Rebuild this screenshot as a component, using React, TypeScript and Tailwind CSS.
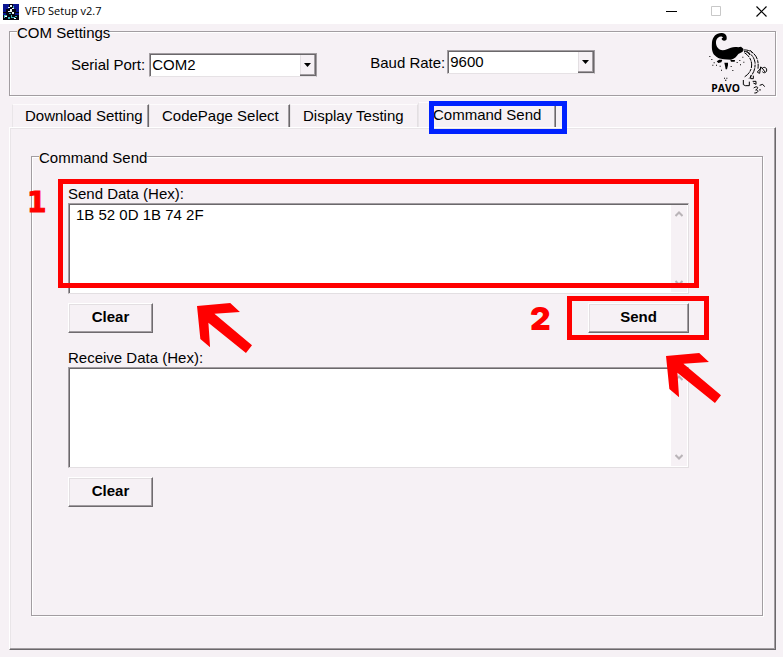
import type { ReactNode } from "react";
import clsx from "clsx";

const tabs = ["Download Setting", "CodePage Select", "Display Testing", "Command Send"];
const tabWidths = ["w-[137px]", "w-[141px]", "w-[128px]", "w-[138px]"];

function AppIcon() {
    return (
        <svg viewBox="0 0 16 16" className="w-4 h-4" shapeRendering="crispEdges">
            <rect width="16" height="16" fill="#050510" />
            <path d="M0 0h6v5H3v3H0zM10 0h6v8h-3V5h-3zM0 9h3v2H0zM12 9h4v2h-4z" fill="#0a1590" />
            <path d="M7 1h2v2H7zM5 3h2v1H5zM9 4h2v1H9zM7 5h2v3H7zM5 7h2v1H5zM9 8h2v2H9z" fill="#e8f4f8" />
            <path d="M1 11h3v1H2v2H1zM5 13h2v2H5zM8 11h1v2h3v1H8zM12 12h2v1h-2zM10 2h1v2h-1zM6 9h2v1H6z" fill="#3fb5bd" />
            <path d="M2 12h2v1H2zM11 14h2v1h-2z" fill="#ffffff" />
        </svg>
    );
}

function PavoLogo() {
    return (
        <svg viewBox="78 96 192 192" className="w-16 h-16" role="img" aria-label="PAVO">
            <path
                d="M140 117c2-10-4-17-14-18-17-1-28 11-30 27-1 17-1 31 8 40 8 8 16 11 27 12l22 1c11-2 17-10 22-17l13-7 2-9-7-6-8 2c-14-3-24 1-34 6-13 5-23 3-29-6-6-11-5-24 2-29 6-5 13-4 15 0-4 0-5 3-3 6 4 5 13 4 14-2z"
                fill="#000"
            />
            <path d="M110 184l8-5h9l-3 8-9 2zM133 188h11v8l-3 12h-4l-2-11zM151 180h14l-1 5h-11z" fill="#000" />
            <path
                d="M190 150c19-2 36 10 42 28 3 10 3 18 2 28M192 154c18 2 30 15 33 33 2 18-4 34-18 49M193 158c14 8 22 22 22 37 0 14-7 27-22 36M210 151l8 7M200 153l10 12"
                fill="none"
                stroke="#000"
                strokeWidth="3"
                strokeDasharray="20 3 9 2"
            />
            <path
                d="M232 216l13-14 10 14M242 200l-3 20-7-3M246 206c5-7 14-4 14 4 0 8-8 11-13 5M190 240v14l6 3h12v-12M212 226v10h8v-9M218 244h10v9l-8-4M221 264c10-8 18-1 6 6 11-1 8 10-4 9M239 256l9-3 6 7M240 267v5"
                fill="none"
                stroke="#000"
                strokeWidth="3"
            />
            <path
                d="M88 168h3v3h-3zM94 177h3v3h-3zM101 187h3v3h-3zM97 194h3v3h-3zM108 194h3v3h-3zM119 197h3v3h-3zM123 209h3v3h-3zM152 198h3v3h-3zM157 210h3v3h-3zM170 186h3v3h-3zM178 180h3v3h-3zM180 193h3v3h-3zM187 170h3v3h-3zM190 185h3v3h-3zM132 233h3v3h-3zM139 233h3v3h-3zM135 239h4v3h-4z"
                fill="#000"
            />
            <text x="94" y="276" fontSize="31" fontWeight="700" fontFamily="'Open Sans', sans-serif">
                PAVO
            </text>
        </svg>
    );
}

function Arrow({ className }: { className: string }) {
    return (
        <svg viewBox="531 399 164 149" className={clsx("absolute z-10 w-[55px] h-[50px] pointer-events-none", className)}>
            <path d="M531 408L630 399L659 426L583 431L695 525L677 548L565 458L570 531L541 506Z" fill="#ff0000" />
        </svg>
    );
}

function GroupBox({ title, className, children }: { title: string; className: string; children: ReactNode }) {
    return (
        <fieldset
            className={clsx(
                "min-w-0 border border-[#a29da1] shadow-[inset_1px_1px_0_#fff,1px_1px_0_#fff]",
                className
            )}
        >
            <legend className="h-[15px] ml-[7px] pt-px leading-[15px] bg-[#f6f1f5]">{title}</legend>
            {children}
        </fieldset>
    );
}

function ComboBox({ id, options, className }: { id: string; options: string[]; className: string }) {
    return (
        <div className={clsx("relative h-6", className)}>
            <select
                id={id}
                className="block w-full h-full pl-[2px] pb-px leading-5 bg-white border border-t-[#a29da1] border-l-[#a29da1] border-b-[#e6e2e5] border-r-[#a29da1] shadow-[inset_1px_1px_0_#6b686b] appearance-none outline-none"
            >
                {options.map((o) => (
                    <option key={o}>{o}</option>
                ))}
            </select>
            <span className="absolute top-[2px] right-px bottom-px flex items-center justify-center w-4 bg-[#f6f1f5] border-r border-b border-[#6b686b] shadow-[inset_-1px_-1px_0_#a29da1,inset_1px_0_0_#e3dfe2] pointer-events-none">
                <svg viewBox="0 0 7 4" className="w-[7px] h-1">
                    <path d="M0 0h7L3.500 4z" fill="#000" />
                </svg>
            </span>
        </div>
    );
}

function HexBox({ id, value, className }: { id: string; value: string; className: string }) {
    return (
        <div
            className={clsx(
                "flex p-px bg-white border border-t-[#a29da1] border-l-[#a29da1] border-b-[#e3dfe2] border-r-[#e3dfe2] shadow-[inset_1px_1px_0_#6b686b]",
                className
            )}
        >
            <textarea id={id} defaultValue={value} className="flex-1 pt-px pl-[6px] leading-[18px] resize-none outline-none" />
            <div className="flex flex-col items-center justify-between w-4 py-[6px] bg-[#f6f1f5]">
                <svg viewBox="0 0 8 6" className="w-2 h-[6px]">
                    <path d="M0.500 5L4 1.500L7.500 5" fill="none" stroke="#b9b4b8" strokeWidth="2" />
                </svg>
                <svg viewBox="0 0 8 6" className="w-2 h-[6px]">
                    <path d="M0.500 1L4 4.500L7.500 1" fill="none" stroke="#b9b4b8" strokeWidth="2" />
                </svg>
            </div>
        </div>
    );
}

function PushButton({ className, children }: { className: string; children: ReactNode }) {
    return (
        <button
            type="button"
            className={clsx(
                "h-[30px] pb-[2px] font-bold bg-[#f6f1f5] border border-t-white border-l-white border-b-[#6f6b6f] border-r-[#6f6b6f] shadow-[inset_-1px_-1px_0_#a29da1,inset_1px_1px_0_#e3dfe2]",
                className
            )}
        >
            {children}
        </button>
    );
}

export default function App() {
    return (
        <div className="flex flex-col min-h-screen bg-[#f6f1f5] text-[15px] text-black font-['Liberation_Sans',Arial,sans-serif]">
            <header className="flex items-center h-6 pl-[3px] overflow-hidden bg-white">
                <AppIcon />
                <h1 className="ml-[6px] mb-[2px] text-[11px] leading-4 font-['Open_Sans','Noto_Sans',sans-serif]">VFD Setup v2.7</h1>
                <div className="flex items-center ml-auto -mr-px mb-[2px]">
                    <button type="button" aria-label="Minimize" className="flex justify-center w-[45px]">
                        <svg viewBox="0 0 11 11" className="w-[11px] h-[11px]">
                            <path d="M0 5h11v1H0z" fill="#000" />
                        </svg>
                    </button>
                    <button type="button" aria-label="Maximize" disabled className="flex justify-center w-[45px]">
                        <svg viewBox="0 0 11 11" className="w-[11px] h-[11px]">
                            <path d="M.5.5h9v9h-9z" fill="none" stroke="#c8c8c8" />
                        </svg>
                    </button>
                    <button type="button" aria-label="Close" className="flex justify-center w-[45px]">
                        <svg viewBox="0 0 11 11" className="w-[11px] h-[11px]">
                            <path d="M.5.5l10 10M10.500.5l-10 10" fill="none" stroke="#000" strokeWidth="1.200" />
                        </svg>
                    </button>
                </div>
            </header>

            <main className="flex flex-col flex-1 pl-[9px] pr-[7px] pb-[7px]">
                <GroupBox title="COM Settings" className="h-[72px]">
                    <div className="flex items-start -mt-[7px] pl-[61px] pr-[5px]">
                        <label htmlFor="port" className="mt-6 leading-[18px]">
                            Serial Port:
                        </label>
                        <div className="mt-[21px] ml-1">
                            <ComboBox id="port" options={["COM2", "COM1", "COM3"]} className="w-[168px]" />
                        </div>
                        <label htmlFor="baud" className="mt-[22px] ml-[53px] leading-[18px]">
                            Baud Rate:
                        </label>
                        <div className="mt-[18px] ml-[2px]">
                            <ComboBox id="baud" options={["9600", "19200", "38400"]} className="w-[148px]" />
                        </div>
                        <div className="ml-auto">
                            <PavoLogo />
                        </div>
                    </div>
                </GroupBox>

                <div role="tablist" className="flex items-end h-[31px] pl-[3px]">
                    {tabs.map((tab, i) => {
                        const active = i === 3;
                        return (
                            <div key={tab} className={clsx("relative", tabWidths[i])}>
                                <button
                                    type="button"
                                    role="tab"
                                    aria-selected={active}
                                    className={clsx(
                                        "block w-full text-left whitespace-nowrap leading-[22px] border-t border-l border-t-[#fdfbfc] border-l-[#e9e5e8]",
                                        active ? "h-[25px] pl-[14px]" : "h-[23px] pl-3",
                                        i === 2
                                            ? "border-r border-r-[#e3dfe2]"
                                            : "border-r border-r-[#6b686b] shadow-[inset_-1px_0_0_#a29da1]"
                                    )}
                                >
                                    {tab}
                                </button>
                                {active && (
                                    <span className="absolute -top-px left-[11px] w-[138px] h-[33px] border-[5px] border-[#0022ff] pointer-events-none" />
                                )}
                            </div>
                        );
                    })}
                </div>

                <section
                    role="tabpanel"
                    className="flex flex-col flex-1 pt-[21px] pr-3 pb-[33px] pl-[21px] border border-t-white border-l-white border-r-[#6b686b] border-b-[#6b686b] shadow-[inset_-1px_-1px_0_#a29da1,inset_1px_1px_0_#e9e5e8]"
                >
                    <GroupBox title="Command Send" className="flex-1">
                        <div className="relative pt-[21px] pb-8 pl-9 pr-[73px]">
                            <label htmlFor="send" className="block leading-[18px]">
                                Send Data (Hex):
                            </label>
                            <HexBox id="send" value="1B 52 0D 1B 74 2F" className="h-[91px]" />
                            <div className="flex justify-between mt-[9px]">
                                <PushButton className="w-[85px]">Clear</PushButton>
                                <div className="relative">
                                    <PushButton className="w-[101px]">Send</PushButton>
                                    <span className="absolute -top-[7px] -left-[21px] w-[142px] h-[44px] border-[5px] border-[#ff0000] pointer-events-none" />
                                    <span className="absolute top-px -left-[58px] text-[32px] leading-[30px] font-black text-[#ff0000] font-['Inter',sans-serif]">
                                        2
                                    </span>
                                    <Arrow className="top-[50px] left-[78px]" />
                                </div>
                            </div>
                            <label htmlFor="receive" className="block mt-4 leading-[18px]">
                                Receive Data (Hex):
                            </label>
                            <HexBox id="receive" value="" className="h-[101px]" />
                            <PushButton className="w-[85px] mt-[9px]">Clear</PushButton>

                            <span className="absolute top-[15px] left-[26px] right-[63px] h-[109px] border-[5px] border-[#ff0000] pointer-events-none" />
                            <span className="absolute top-6 -left-[5px] text-[28px] leading-[30px] font-bold text-[#ff0000] font-['DejaVu_Sans',sans-serif] [-webkit-text-stroke:1px_#ff0000]">
                                1
                            </span>
                            <Arrow className="top-[139px] left-[165px]" />
                        </div>
                    </GroupBox>
                </section>
            </main>
        </div>
    );
}
